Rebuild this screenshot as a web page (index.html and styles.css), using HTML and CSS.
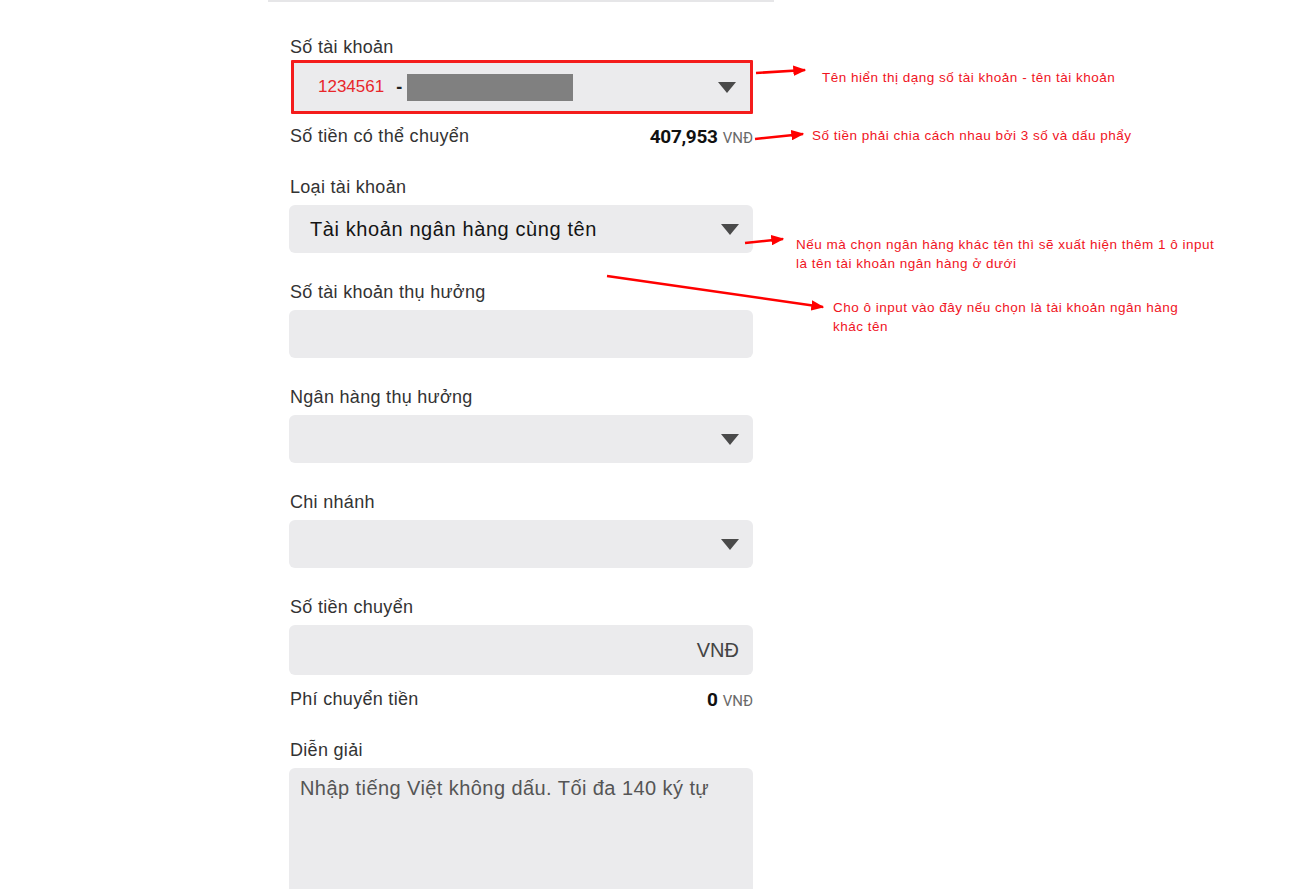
FILE: index.html
```html
<!DOCTYPE html>
<html lang="vi">
<head>
<meta charset="utf-8">
<title>Chuyển tiền</title>
<link rel="stylesheet" href="styles.css">
</head>
<body>
<div class="page">
  <div class="form">
    <div class="group first">
      <div class="label">Số tài khoản</div>
      <div class="field field-account">
        <span class="acc-no">1234561</span>
        <span class="acc-dash">-</span>
        <span class="acc-mask"></span>
        <span class="caret"></span>
      </div>
    </div>
    <div class="info-row">
      <span class="info-label">Số tiền có thể chuyển</span>
      <span class="amount"><b>407,953</b> <span class="cur">VNĐ</span></span>
    </div>

    <div class="group after-info">
      <div class="label">Loại tài khoản</div>
      <div class="field select">
        <span class="value">Tài khoản ngân hàng cùng tên</span>
        <span class="caret"></span>
      </div>
    </div>

    <div class="group">
      <div class="label">Số tài khoản thụ hưởng</div>
      <div class="field"></div>
    </div>

    <div class="group">
      <div class="label">Ngân hàng thụ hưởng</div>
      <div class="field select"><span class="value"></span><span class="caret"></span></div>
    </div>

    <div class="group">
      <div class="label">Chi nhánh</div>
      <div class="field select"><span class="value"></span><span class="caret"></span></div>
    </div>

    <div class="group">
      <div class="label">Số tiền chuyển</div>
      <div class="field field-money"><span class="suffix">VNĐ</span></div>
    </div>
    <div class="info-row fee">
      <span class="info-label">Phí chuyển tiền</span>
      <span class="amount"><b>0</b> <span class="cur">VNĐ</span></span>
    </div>

    <div class="group after-info">
      <div class="label">Diễn giải</div>
      <div class="field textarea"><span class="placeholder">Nhập tiếng Việt không dấu. Tối đa 140 ký tự</span></div>
    </div>
  </div>

  <svg class="arrows" width="1300" height="889" viewBox="0 0 1300 889">
    <defs>
      <marker id="head" markerWidth="5" markerHeight="4" refX="4.5" refY="2" orient="auto" markerUnits="strokeWidth">
        <path d="M0,0 L5,2 L0,4 Z" fill="#f00"/>
      </marker>
    </defs>
    <line x1="756" y1="73" x2="805" y2="70" stroke="#f00" stroke-width="2.6" marker-end="url(#head)"/>
    <line x1="755" y1="139" x2="803" y2="134" stroke="#f00" stroke-width="2.6" marker-end="url(#head)"/>
    <line x1="745" y1="243" x2="783" y2="239" stroke="#f00" stroke-width="2.6" marker-end="url(#head)"/>
    <line x1="607" y1="276" x2="823" y2="307" stroke="#f00" stroke-width="2.6" marker-end="url(#head)"/>
  </svg>

  <div class="note n1">Tên hiển thị dạng số tài khoản - tên tài khoản</div>
  <div class="note n2">Số tiền phải chia cách nhau bởi 3 số và dấu phẩy</div>
  <div class="note n3">Nếu mà chọn ngân hàng khác tên thì sẽ xuất hiện thêm 1 ô input<br>là tên tài khoản ngân hàng ở dưới</div>
  <div class="note n4">Cho ô input vào đây nếu chọn là tài khoản ngân hàng<br>khác tên</div>
</div>
</body>
</html>
```

FILE: styles.css
```css
* { box-sizing: border-box; }
html, body {
  margin: 0;
  padding: 0;
  background: #fff;
}
body {
  font-family: "Liberation Sans", Arial, sans-serif;
  color: #333;
  width: 1300px;
  height: 889px;
  overflow: hidden;
}
.page {
  position: relative;
  width: 1300px;
  height: 889px;
}
.form {
  margin-left: 268px;
  width: 506px;
  border-top: 2px solid #e6e6e8;
  padding: 0 21px 0 21px;
  display: flex;
  flex-direction: column;
}
.group {
  display: flex;
  flex-direction: column;
  margin-top: 28px;
}
.group.first { margin-top: 34px; }
.group.after-info { margin-top: 30px; }
.label {
  font-size: 18px;
  letter-spacing: 0.3px;
  line-height: 20px;
  height: 21px;
  padding-top: 1px;
  color: #333;
  padding-left: 1px;
  margin-bottom: 8px;
}
.group.first .label { margin-bottom: 3px; }
.field {
  height: 48px;
  background: #ebebed;
  border-radius: 6px;
  display: flex;
  align-items: center;
  padding: 0 14px 0 21px;
}
.field-account {
  height: 54px;
  border: 3px solid #f41c1c;
  border-radius: 1px;
  margin-left: 2px;
  padding-left: 24px;
}
.acc-no {
  color: #e8262a;
  font-size: 17px;
}
.acc-dash {
  color: #222;
  font-weight: bold;
  font-size: 18px;
  margin-left: 12px;
}
.acc-mask {
  width: 166px;
  height: 27px;
  background: #808080;
  margin-left: 5px;
}
.caret {
  margin-left: auto;
  width: 0;
  height: 0;
  border-left: 9px solid transparent;
  border-right: 9px solid transparent;
  border-top: 11px solid #4a4a4a;
}
.value {
  font-size: 20px;
  letter-spacing: 0.6px;
  color: #141414;
}
.info-row {
  margin-top: 10px;
  height: 22px;
  padding-top: 2px;
  display: flex;
  align-items: center;
  justify-content: space-between;
  padding-left: 1px;
}
.info-row.fee { margin-top: 12px; }
.info-label {
  font-size: 18px;
  letter-spacing: 0.3px;
  color: #333;
}
.amount {
  font-family: "Roboto", "Liberation Sans", sans-serif;
  display: flex;
  align-items: baseline;
  gap: 5px;
}
.amount b {
  font-size: 19px;
  color: #111;
  font-weight: bold;
  letter-spacing: -0.3px;
}
.amount .cur {
  font-size: 15px;
  color: #6a6a6a;
}
.field-money {
  height: 50px;
  justify-content: flex-end;
}
.suffix {
  font-size: 20px;
  color: #444;
}
.textarea {
  height: 140px;
  align-items: flex-start;
  padding: 8px 11px;
  border-radius: 6px 6px 0 0;
}
.placeholder {
  font-size: 20px;
  letter-spacing: 0.43px;
  line-height: 24px;
  color: #555;
}
.arrows {
  position: absolute;
  left: 0;
  top: 0;
  pointer-events: none;
}
.note {
  position: absolute;
  font-family: "Liberation Sans", Arial, sans-serif;
  font-size: 13.5px;
  letter-spacing: 0.5px;
  line-height: 19px;
  color: #f0141e;
  white-space: nowrap;
}
.n1 { left: 822px; top: 68px; }
.n2 { left: 812px; top: 126px; }
.n3 { left: 796px; top: 235px; }
.n4 { left: 833px; top: 298px; }
```
